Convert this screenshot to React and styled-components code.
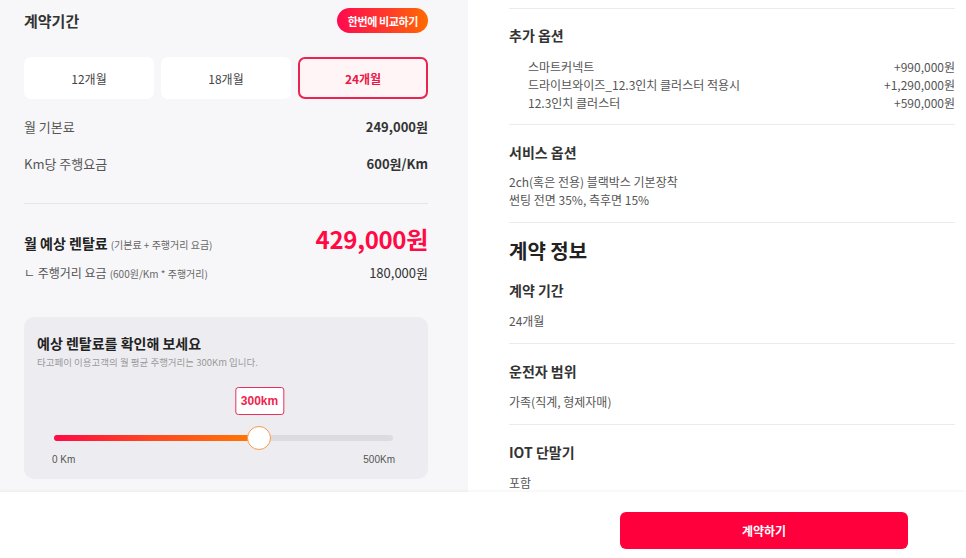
import React from "react";
import styled, { createGlobalStyle } from "styled-components";

const Global = createGlobalStyle`
  * { box-sizing: border-box; }
  html, body { margin: 0; padding: 0; background: #fff; }
  body {
    font-family: "Noto Sans CJK KR", "Noto Sans", sans-serif;
    color: #333;
    width: 966px;
    height: 558px;
    overflow: hidden;
  }
`;

const Page = styled.div`
  width: 966px;
  height: 558px;
  display: flex;
  flex-direction: column;
`;

const Main = styled.div`
  height: 492px;
  display: grid;
  grid-template-columns: 468px 1fr;
  overflow: hidden;
`;

const LeftPanel = styled.div`
  background: #f7f7f9;
  padding: 8px 40px 14px 24px;
  display: flex;
  flex-direction: column;
`;

const HeaderRow = styled.div`
  display: flex;
  align-items: center;
  justify-content: space-between;
  height: 25px;
`;

const PanelTitle = styled.h2`
  margin: 0;
  font-size: 15px;
  font-weight: 700;
  color: #333;
  line-height: 24px;
`;

const CompareBadge = styled.button`
  border: 0;
  height: 25px;
  padding: 0 10px 0 11px;
  border-radius: 13px;
  background: linear-gradient(90deg, #ff0a4e 0%, #ff3a2a 55%, #ff6a00 100%);
  color: #fff;
  font-family: inherit;
  font-size: 11px;
  font-weight: 700;
  letter-spacing: -0.4px;
`;

const Tabs = styled.div`
  margin-top: 24px;
  display: grid;
  grid-template-columns: repeat(3, 1fr);
  gap: 7px;
`;

const Tab = styled.button`
  height: 42px;
  border-radius: 7px;
  border: 2px solid ${(p) => (p.$active ? "#ea2350" : "transparent")};
  background: ${(p) => (p.$active ? "#fff4f6" : "#ffffff")};
  color: ${(p) => (p.$active ? "#ea1747" : "#444")};
  font-family: inherit;
  font-size: 12px;
  font-weight: ${(p) => (p.$active ? 700 : 400)};
  padding: 0;
`;

const FeeList = styled.div`
  margin-top: 9px;
  display: flex;
  flex-direction: column;
`;

const FeeRow = styled.div`
  height: 37px;
  display: flex;
  align-items: center;
  justify-content: space-between;
`;

const FeeLabel = styled.span`
  font-size: 13px;
  color: #555;
`;

const FeeValue = styled.span`
  font-size: 13px;
  font-weight: 700;
  color: #333;
`;

const Divider = styled.hr`
  margin: ${(p) => p.$m || "0"};
  border: 0;
  border-top: 1px solid #e6e6ea;
  height: 0;
`;

const TotalRow = styled.div`
  margin-top: 20px;
  display: flex;
  align-items: baseline;
  justify-content: space-between;
`;

const TotalLabel = styled.span`
  font-size: 14px;
  font-weight: 700;
  color: #222;
`;

const Note = styled.span`
  font-size: 10px;
  font-weight: 400;
  color: #666;
  margin-left: 3px;
`;

const TotalValue = styled.span`
  font-size: 24px;
  line-height: 30px;
  font-weight: 700;
  color: #ff0a45;
  letter-spacing: -0.3px;
`;

const SubRow = styled.div`
  margin-top: 8px;
  height: 20px;
  display: flex;
  align-items: center;
  justify-content: space-between;
`;

const SubLabel = styled.span`
  font-size: 12px;
  color: #555;
`;

const SubValue = styled.span`
  font-size: 13px;
  color: #333;
`;

const SimCard = styled.div`
  margin-top: 35px;
  background: #ededf1;
  border-radius: 10px;
  padding: 16px 13px 12px;
`;

const SimTitle = styled.div`
  font-size: 14px;
  line-height: 20px;
  font-weight: 700;
  color: #222;
`;

const SimSub = styled.div`
  font-size: 9.5px;
  line-height: 14px;
  color: #999;
  margin-top: 2px;
`;

const SliderArea = styled.div`
  position: relative;
  margin: 0 20px 0 15px;
  padding-top: 66px;
`;

const Bubble = styled.div`
  position: absolute;
  top: 18px;
  transform: translateX(-50%);
  height: 28px;
  padding: 0 5px;
  border: 1px solid #ea2f5a;
  border-radius: 3px;
  background: #fff;
  display: flex;
  align-items: center;
  font-family: "Liberation Sans", Arial, sans-serif;
  font-size: 12px;
  font-weight: 700;
  color: #f0244f;
`;

const Track = styled.div`
  position: relative;
  margin: 0 2px;
  height: 6px;
  border-radius: 3px;
  background: #dcdcdf;
`;

const Fill = styled.div`
  position: absolute;
  left: 0;
  top: 0;
  bottom: 0;
  border-radius: 3px;
  background: linear-gradient(90deg, #ff0a45 0%, #ff4a1f 50%, #ff7a00 100%);
`;

const Thumb = styled.div`
  position: absolute;
  top: 50%;
  width: 24px;
  height: 24px;
  border-radius: 50%;
  background: #fff;
  border: 1px solid #f59a4a;
  transform: translate(-50%, -50%);
`;

const Scale = styled.div`
  margin-top: 12px;
  display: flex;
  justify-content: space-between;
  font-family: "Liberation Sans", Arial, sans-serif;
  font-size: 10px;
  line-height: 14px;
  color: #555;
`;

const RightPanel = styled.div`
  background: #fff;
  padding: 8px 11px 0 41px;
  display: flex;
  flex-direction: column;
`;

const Section = styled.section`
  border-top: 1px solid #ebebeb;
  padding: ${(p) => p.$pad || "17px 0 13px"};
`;

const SectionTitle = styled.h3`
  margin: ${(p) => p.$mt || "0"} 0 0;
  font-size: 14px;
  line-height: 20px;
  font-weight: 700;
  color: #333;
`;

const BigTitle = styled.h2`
  margin: 0;
  font-size: 20px;
  line-height: 28px;
  font-weight: 700;
  color: #222;
`;

const OptionList = styled.ul`
  list-style: none;
  margin: 13px 0 0;
  padding: 0 0 0 19px;
`;

const OptionItem = styled.li`
  display: flex;
  justify-content: space-between;
  font-size: 12px;
  line-height: 18px;
  color: #555;
`;

const BodyText = styled.p`
  margin: ${(p) => p.$mt || "11px"} 0 0;
  font-size: 12px;
  line-height: 18px;
  color: #555;
`;

const Footer = styled.footer`
  flex: 1;
  background: #fff;
  box-shadow: 0 -1px 3px rgba(0, 0, 0, 0.05);
  position: relative;
  display: flex;
  justify-content: flex-end;
  padding: 20px 58px 0 0;
`;

const CtaButton = styled.button`
  width: 288px;
  height: 37px;
  border: 0;
  border-radius: 6px;
  background: #ff003c;
  color: #fff;
  font-family: inherit;
  font-size: 12px;
  font-weight: 700;
`;

const periods = ["12개월", "18개월", "24개월"];
const options = [
  ["스마트커넥트", "+990,000원"],
  ["드라이브와이즈_12.3인치 클러스터 적용시", "+1,290,000원"],
  ["12.3인치 클러스터", "+590,000원"],
];

export default function App() {
  const pct = 60.5;
  return (
    <>
      <Global />
      <Page>
        <Main>
          <LeftPanel>
            <HeaderRow>
              <PanelTitle>계약기간</PanelTitle>
              <CompareBadge>한번에 비교하기</CompareBadge>
            </HeaderRow>
            <Tabs>
              {periods.map((p) => (
                <Tab key={p} $active={p === "24개월"}>
                  {p}
                </Tab>
              ))}
            </Tabs>
            <FeeList>
              <FeeRow>
                <FeeLabel>월 기본료</FeeLabel>
                <FeeValue>249,000원</FeeValue>
              </FeeRow>
              <FeeRow>
                <FeeLabel>Km당 주행요금</FeeLabel>
                <FeeValue>600원/Km</FeeValue>
              </FeeRow>
            </FeeList>
            <Divider $m="21px 0 0" />
            <TotalRow>
              <TotalLabel>
                월 예상 렌탈료<Note>(기본료 + 주행거리 요금)</Note>
              </TotalLabel>
              <TotalValue>429,000원</TotalValue>
            </TotalRow>
            <SubRow>
              <SubLabel>
                ㄴ 주행거리 요금<Note>(600원/Km * 주행거리)</Note>
              </SubLabel>
              <SubValue>180,000원</SubValue>
            </SubRow>
            <SimCard>
              <SimTitle>예상 렌탈료를 확인해 보세요</SimTitle>
              <SimSub>타고페이 이용고객의 월 평균 주행거리는 300Km 입니다.</SimSub>
              <SliderArea>
                <Bubble style={{ left: `${pct}%` }}>300km</Bubble>
                <Track>
                  <Fill style={{ width: `${pct}%` }} />
                  <Thumb style={{ left: `${pct}%` }} />
                </Track>
                <Scale>
                  <span>0 Km</span>
                  <span>500Km</span>
                </Scale>
              </SliderArea>
            </SimCard>
          </LeftPanel>
          <RightPanel>
            <Section $pad="16px 0 12px">
              <SectionTitle>추가 옵션</SectionTitle>
              <OptionList>
                {options.map(([n, v]) => (
                  <OptionItem key={n}>
                    <span>{n}</span>
                    <span>{v}</span>
                  </OptionItem>
                ))}
              </OptionList>
            </Section>
            <Section $pad="17px 0 13px">
              <SectionTitle>서비스 옵션</SectionTitle>
              <BodyText>
                2ch(혹은 전용) 블랙박스 기본장착
                <br />
                썬팅 전면 35%, 측후면 15%
              </BodyText>
            </Section>
            <Section $pad="14px 0 13px">
              <BigTitle>계약 정보</BigTitle>
              <SectionTitle $mt="15px">계약 기간</SectionTitle>
              <BodyText $mt="12px">24개월</BodyText>
            </Section>
            <Section>
              <SectionTitle>운전자 범위</SectionTitle>
              <BodyText $mt="12px">가족(직계, 형제자매)</BodyText>
            </Section>
            <Section>
              <SectionTitle>IOT 단말기</SectionTitle>
              <BodyText $mt="12px">포함</BodyText>
            </Section>
          </RightPanel>
        </Main>
        <Footer>
          <CtaButton>계약하기</CtaButton>
        </Footer>
      </Page>
    </>
  );
}
